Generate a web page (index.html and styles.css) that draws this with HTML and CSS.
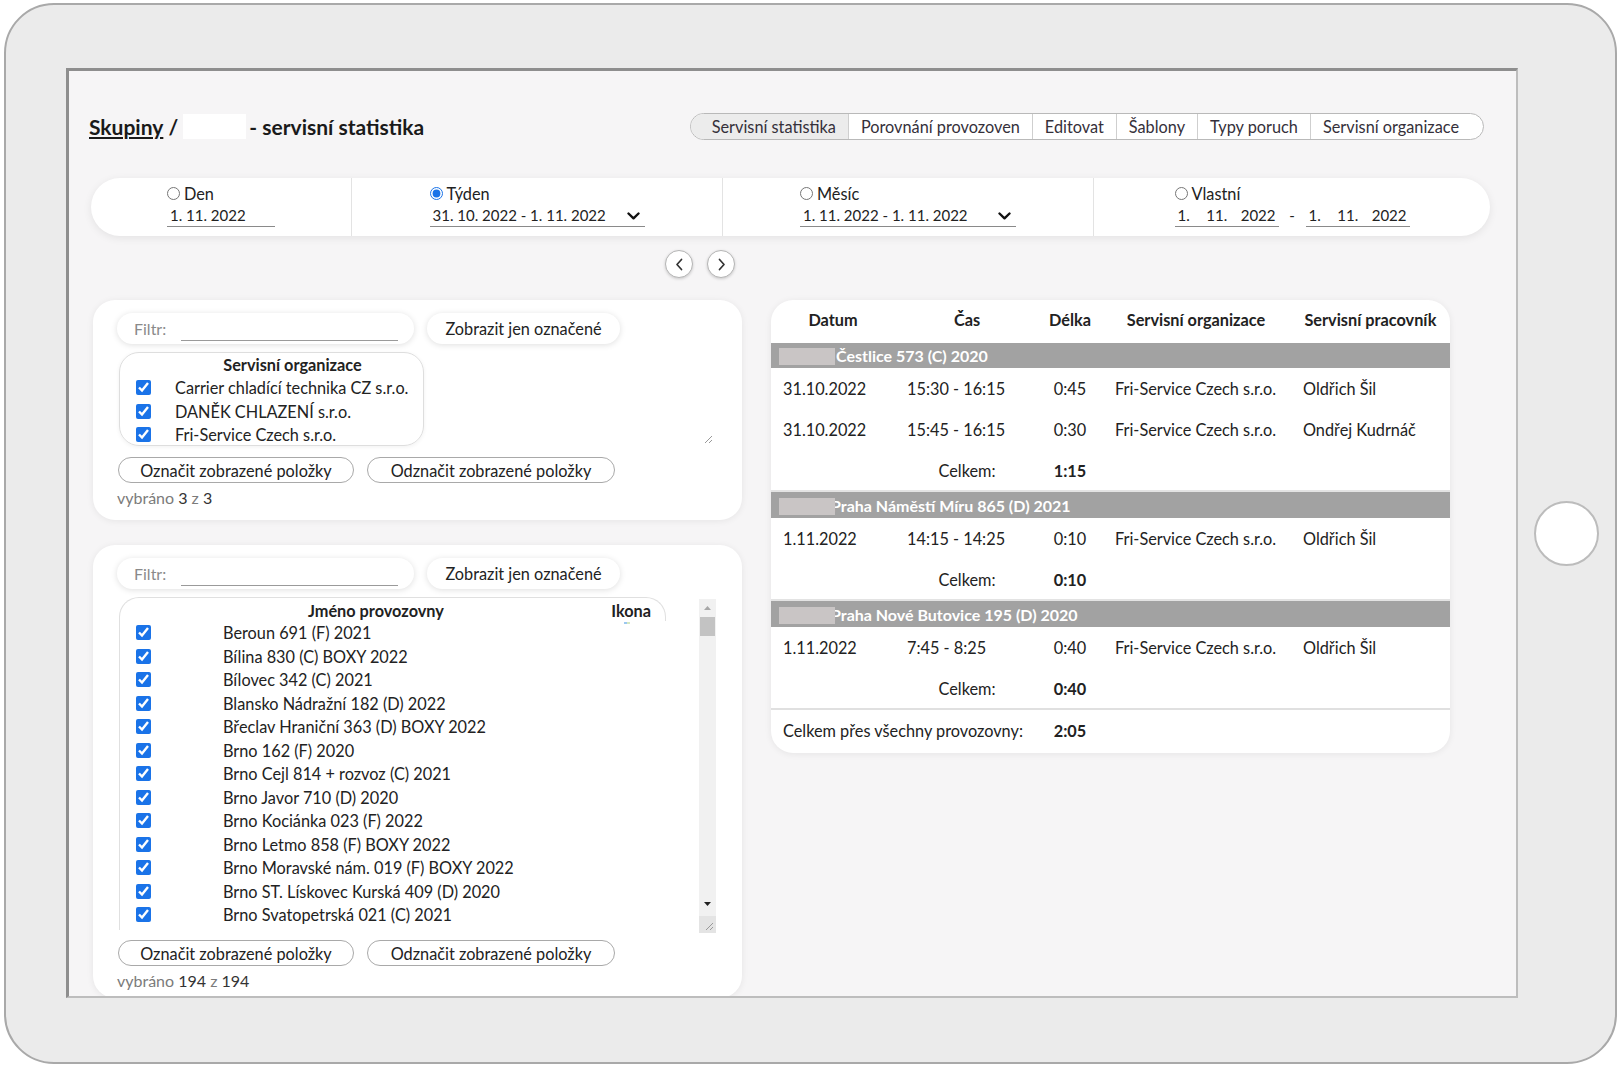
FILE: index.html
```html
<!DOCTYPE html>
<html lang="cs">
<head>
<meta charset="utf-8">
<title>Skupiny - servisní statistika</title>
<link rel="stylesheet" href="styles.css">
</head>
<body>
<div class="tablet">
  <div class="screen">
    <header class="topbar">
      <h1 class="title"><span class="crumb">Skupiny</span> / <span class="redact"></span>- servisní statistika</h1>
      <nav class="tabs">
        <span class="tab tab-active">Servisní statistika</span>
        <span class="tab">Porovnání provozoven</span>
        <span class="tab">Editovat</span>
        <span class="tab">Šablony</span>
        <span class="tab">Typy poruch</span>
        <span class="tab tab-last">Servisní organizace</span>
      </nav>
    </header>

    <div class="periods">
      <div class="period">
        <div class="pwrap">
          <label class="rline"><input type="radio" name="per" class="radio"> Den</label>
          <div class="dinput w-day">1. 11. 2022</div>
        </div>
      </div>
      <div class="period">
        <div class="pwrap">
          <label class="rline"><input type="radio" name="per" class="radio" checked> Týden</label>
          <div class="dinput dselect w-week"><span>31. 10. 2022 - 1. 11. 2022</span>
            <svg class="chev" width="13" height="8" viewBox="0 0 13 8"><path d="M1.5 1.5 L6.5 6.3 L11.5 1.5" fill="none" stroke="#111" stroke-width="2.4" stroke-linecap="round" stroke-linejoin="round"/></svg>
          </div>
        </div>
      </div>
      <div class="period">
        <div class="pwrap">
          <label class="rline"><input type="radio" name="per" class="radio"> Měsíc</label>
          <div class="dinput dselect w-month"><span>1. 11. 2022 - 1. 11. 2022</span>
            <svg class="chev" width="13" height="8" viewBox="0 0 13 8"><path d="M1.5 1.5 L6.5 6.3 L11.5 1.5" fill="none" stroke="#111" stroke-width="2.4" stroke-linecap="round" stroke-linejoin="round"/></svg>
          </div>
        </div>
      </div>
      <div class="period period-last">
        <div class="pwrap">
          <label class="rline"><input type="radio" name="per" class="radio"> Vlastní</label>
          <div class="custom">
            <div class="dinput seg"><span class="s1">1.</span><span class="s2">11.</span><span class="s3">2022</span></div>
            <span class="dash">-</span>
            <div class="dinput seg"><span class="s1">1.</span><span class="s2">11.</span><span class="s3">2022</span></div>
          </div>
        </div>
      </div>
    </div>

    <div class="pager">
      <button class="circ" type="button"><svg width="9" height="13" viewBox="0 0 9 13"><path d="M6.5 1.5 L2 6.5 L6.5 11.5" fill="none" stroke="#333" stroke-width="1.7" stroke-linecap="round" stroke-linejoin="round"/></svg></button>
      <button class="circ" type="button"><svg width="9" height="13" viewBox="0 0 9 13"><path d="M2.5 1.5 L7 6.5 L2.5 11.5" fill="none" stroke="#333" stroke-width="1.7" stroke-linecap="round" stroke-linejoin="round"/></svg></button>
    </div>

    <div class="main">
      <div class="leftcol">
        <section class="panel panel-org">
          <div class="frow">
            <div class="filter"><span class="flabel">Filtr:</span><span class="fline"></span></div>
            <button class="pillbtn" type="button">Zobrazit jen označené</button>
          </div>
          <div class="orgwrap">
            <div class="orgbox">
              <div class="orghead">Servisní organizace</div>
              <div class="orow"><input type="checkbox" class="cb" checked><span>Carrier chladící technika CZ s.r.o.</span></div>
              <div class="orow"><input type="checkbox" class="cb" checked><span>DANĚK CHLAZENÍ s.r.o.</span></div>
              <div class="orow"><input type="checkbox" class="cb" checked><span>Fri-Service Czech s.r.o.</span></div>
            </div>
            <svg class="grip" width="10" height="10" viewBox="0 0 10 10"><path d="M9 2 L2 9 M9 6 L6 9" stroke="#999" stroke-width="1"/></svg>
          </div>
          <div class="brow">
            <button class="obtn b1" type="button">Označit zobrazené položky</button>
            <button class="obtn b2" type="button">Odznačit zobrazené položky</button>
          </div>
          <div class="count">vybráno <b>3</b> z <b>3</b></div>
        </section>

        <section class="panel panel-shops">
          <div class="frow">
            <div class="filter"><span class="flabel">Filtr:</span><span class="fline"></span></div>
            <button class="pillbtn" type="button">Zobrazit jen označené</button>
          </div>
          <div class="listwrap">
            <div class="listbox">
              <div class="lhead"><span>Jméno provozovny</span><span>Ikona</span></div>
              <div class="lbody">
                <span class="dot"></span>
                <div class="lrow"><input type="checkbox" class="cb" checked><span>Beroun 691 (F) 2021</span></div>
                <div class="lrow"><input type="checkbox" class="cb" checked><span>Bílina 830 (C) BOXY 2022</span></div>
                <div class="lrow"><input type="checkbox" class="cb" checked><span>Bílovec 342 (C) 2021</span></div>
                <div class="lrow"><input type="checkbox" class="cb" checked><span>Blansko Nádražní 182 (D) 2022</span></div>
                <div class="lrow"><input type="checkbox" class="cb" checked><span>Břeclav Hraniční 363 (D) BOXY 2022</span></div>
                <div class="lrow"><input type="checkbox" class="cb" checked><span>Brno 162 (F) 2020</span></div>
                <div class="lrow"><input type="checkbox" class="cb" checked><span>Brno Cejl 814 + rozvoz (C) 2021</span></div>
                <div class="lrow"><input type="checkbox" class="cb" checked><span>Brno Javor 710 (D) 2020</span></div>
                <div class="lrow"><input type="checkbox" class="cb" checked><span>Brno Kociánka 023 (F) 2022</span></div>
                <div class="lrow"><input type="checkbox" class="cb" checked><span>Brno Letmo 858 (F) BOXY 2022</span></div>
                <div class="lrow"><input type="checkbox" class="cb" checked><span>Brno Moravské nám. 019 (F) BOXY 2022</span></div>
                <div class="lrow"><input type="checkbox" class="cb" checked><span>Brno ST. Lískovec Kurská 409 (D) 2020</span></div>
                <div class="lrow"><input type="checkbox" class="cb" checked><span>Brno Svatopetrská 021 (C) 2021</span></div>
                <div class="lrow lrow-cut"><input type="checkbox" class="cb" checked><span class="icomark"></span></div>
              </div>
            </div>
            <div class="vscroll">
              <div class="sbtn"><svg width="7" height="4" viewBox="0 0 7 4"><path d="M0 4 L3.5 0 L7 4 Z" fill="#a8a8a8"/></svg></div>
              <div class="strack"><div class="sthumb"></div></div>
              <div class="sbtn"><svg width="7" height="4" viewBox="0 0 7 4"><path d="M0 0 L3.5 4 L7 0 Z" fill="#222"/></svg></div>
              <div class="scorner"><svg width="10" height="10" viewBox="0 0 10 10"><path d="M9 2 L2 9 M9 6 L6 9" stroke="#999" stroke-width="1"/></svg></div>
            </div>
          </div>
          <div class="brow brow2">
            <button class="obtn b1" type="button">Označit zobrazené položky</button>
            <button class="obtn b2" type="button">Odznačit zobrazené položky</button>
          </div>
          <div class="count">vybráno <b>194</b> z <b>194</b></div>
        </section>
      </div>

      <section class="panel panel-table">
        <table class="stats">
          <colgroup>
            <col class="c1"><col class="c2"><col class="c3"><col class="c4"><col class="c5">
          </colgroup>
          <thead>
            <tr><th>Datum</th><th>Čas</th><th>Délka</th><th>Servisní organizace</th><th>Servisní pracovník</th></tr>
          </thead>
          <tbody>
            <tr class="grp grp-first"><td colspan="5"><span class="gredact"></span>Čestlice 573 (C) 2020</td></tr>
            <tr class="drow"><td>31.10.2022</td><td>15:30 - 16:15</td><td class="ctr">0:45</td><td>Fri-Service Czech s.r.o.</td><td>Oldřich Šil</td></tr>
            <tr class="drow"><td>31.10.2022</td><td>15:45 - 16:15</td><td class="ctr">0:30</td><td>Fri-Service Czech s.r.o.</td><td>Ondřej Kudrnáč</td></tr>
            <tr class="drow"><td></td><td class="ctr">Celkem:</td><td class="ctr"><b>1:15</b></td><td></td><td></td></tr>
            <tr class="grp"><td colspan="5"><span class="gredact gr-over"></span>Praha Náměstí Míru 865 (D) 2021</td></tr>
            <tr class="drow"><td>1.11.2022</td><td>14:15 - 14:25</td><td class="ctr">0:10</td><td>Fri-Service Czech s.r.o.</td><td>Oldřich Šil</td></tr>
            <tr class="drow"><td></td><td class="ctr">Celkem:</td><td class="ctr"><b>0:10</b></td><td></td><td></td></tr>
            <tr class="grp"><td colspan="5"><span class="gredact gr-over"></span>Praha Nové Butovice 195 (D) 2020</td></tr>
            <tr class="drow"><td>1.11.2022</td><td>7:45 - 8:25</td><td class="ctr">0:40</td><td>Fri-Service Czech s.r.o.</td><td>Oldřich Šil</td></tr>
            <tr class="drow"><td></td><td class="ctr">Celkem:</td><td class="ctr"><b>0:40</b></td><td></td><td></td></tr>
            <tr class="total"><td colspan="2">Celkem přes všechny provozovny:</td><td class="ctr"><b>2:05</b></td><td></td><td></td></tr>
          </tbody>
        </table>
      </section>
    </div>
  </div>
  <div class="side"><div class="home"></div></div>
</div>
</body>
</html>
```

FILE: styles.css
```css
* { box-sizing: border-box; }
html, body { margin: 0; padding: 0; background: #fff; }
body {
  padding: 3px 3px 3px 4px;
  font-family: Lato, "Open Sans", sans-serif;
  font-size: 16.3px;
  color: #222;
}
.tablet {
  width: 1613px;
  height: 1061px;
  border: 2px solid #a9a9a9;
  border-radius: 50px;
  background: #ebebeb;
  display: flex;
  padding: 63px 0 0 60px;
}
.screen {
  width: 1452px;
  height: 930px;
  flex: none;
  background: #f6f5f6;
  border-top: 3px solid #8e8e8e;
  border-left: 3px solid #8e8e8e;
  border-right: 2px solid #bdbdbd;
  border-bottom: 2px solid #bdbdbd;
  padding: 0 26px 0 22px;
  overflow: hidden;
}
.side {
  flex: 1;
  display: flex;
  align-items: center;
  justify-content: center;
  margin-top: -63px;
}
.home {
  width: 65px;
  height: 65px;
  border-radius: 50%;
  background: #fff;
  border: 2px solid #bcbcbc;
}

/* header */
.topbar {
  margin-top: 42px;
  height: 27px;
  display: flex;
  align-items: center;
  justify-content: space-between;
  padding-right: 6px;
}
.title {
  margin: 0 0 0 -2px;
  font-size: 21px;
  font-weight: 700;
  color: #1a1a1a;
  display: flex;
  align-items: center;
  white-space: pre;
}
.crumb { text-decoration: underline; text-decoration-thickness: 1.5px; text-underline-offset: 2px; }
.redact {
  display: inline-block;
  width: 63px;
  height: 25px;
  background: #fff;
  margin-right: 3px;
}
.tabs {
  display: flex;
  height: 27px;
  border: 1px solid #b9b9b9;
  border-radius: 14px;
  overflow: hidden;
  background: #fff;
}
.tab {
  padding: 0 12px;
  line-height: 25px;
  font-size: 16.3px;
  color: #35303a;
  border-left: 1px solid #cfcfcf;
  white-space: nowrap;
}
.tab-active { background: #ececec; border-left: none; padding-left: 21px; }
.tab-last { padding-right: 24px; }

/* periods */
.periods {
  margin-top: 38px;
  height: 58px;
  display: grid;
  grid-template-columns: 261px 371px 371px 1fr;
  background: #fff;
  border-radius: 29px;
  box-shadow: 0 2px 8px rgba(0, 0, 0, 0.08);
}
.period {
  display: flex;
  justify-content: center;
  padding-top: 5px;
  border-right: 1px solid #e3e3e3;
}
.period-last { border-right: none; }
.pwrap { display: flex; flex-direction: column; }
.rline {
  height: 20px;
  display: flex;
  align-items: center;
  font-size: 16.3px;
  color: #222;
}
.radio {
  width: 13px;
  height: 13px;
  margin: 0 4px 0 0;
  accent-color: #1a73e8;
}
.dinput {
  height: 22px;
  line-height: 21px;
  border-bottom: 1px solid #8a8a8a;
  font-size: 15px;
  padding: 0 3px;
  margin-top: 2px;
  white-space: nowrap;
}
.w-day { width: 108px; }
.dselect { display: flex; align-items: center; justify-content: space-between; padding-right: 5px; }
.w-week { width: 215px; }
.w-month { width: 216px; }
.chev { margin-top: 1px; }
.custom { display: flex; align-items: flex-start; }
.seg { width: 104px; display: flex; }
.seg .s1 { width: 31px; }
.seg .s2 { width: 37px; }
.dash { width: 27px; text-align: center; font-size: 15px; line-height: 24px; }

/* pager */
.pager {
  margin-top: 14px;
  height: 28px;
  display: flex;
  gap: 14px;
  padding-left: 574px;
}
.circ {
  width: 28px;
  height: 28px;
  border-radius: 50%;
  border: 1px solid #b5b5b5;
  background: #fff;
  box-shadow: 0 1px 3px rgba(0, 0, 0, 0.18);
  display: flex;
  align-items: center;
  justify-content: center;
  padding: 0;
}

/* main */
.main {
  margin-top: 22px;
  display: flex;
  gap: 29px;
  padding-left: 2px;
  align-items: flex-start;
}
.leftcol {
  width: 649px;
  display: flex;
  flex-direction: column;
  gap: 25px;
}
.panel {
  background: #fff;
  border-radius: 22px;
  box-shadow: 0 1px 7px rgba(0, 0, 0, 0.07);
}
.panel-org { padding: 13px 26px 11px 24px; }
.panel-shops { padding: 13px 26px 6px 24px; }
.frow { display: flex; gap: 13px; height: 31px; }
.filter {
  width: 297px;
  height: 31px;
  border-radius: 16px;
  background: #fff;
  box-shadow: 0 1px 6px rgba(0, 0, 0, 0.13);
  display: flex;
  align-items: center;
  padding-left: 17px;
}
.flabel { color: #8a8a8a; font-size: 16px; width: 47px; }
.fline {
  width: 217px;
  height: 1px;
  background: #9a9a9a;
  align-self: flex-end;
  margin-bottom: 3px;
}
.pillbtn {
  width: 193px;
  height: 31px;
  border: none;
  border-radius: 16px;
  background: #fff;
  box-shadow: 0 1px 6px rgba(0, 0, 0, 0.13);
  font-family: inherit;
  font-size: 16.3px;
  color: #222;
  padding: 0;
}
.orgwrap {
  margin-top: 8px;
  margin-left: 2px;
  width: 597px;
  height: 94px;
  display: flex;
  justify-content: space-between;
  align-items: flex-end;
}
.orgbox {
  width: 305px;
  height: 94px;
  border: 1px solid #dedede;
  border-radius: 20px;
  box-shadow: 0 1px 4px rgba(0, 0, 0, 0.06);
  overflow: hidden;
}
.orghead {
  height: 23px;
  line-height: 23px;
  font-weight: 700;
  font-size: 16.3px;
  padding-left: 56px;
  padding-right: 14px;
  text-align: center;
}
.orow, .lrow {
  height: 23.5px;
  display: flex;
  align-items: center;
  font-size: 16.3px;
  white-space: nowrap;
}
.cb {
  width: 15px;
  height: 15px;
  margin: 0 0 0 16px;
  accent-color: #1a73e8;
  flex: none;
}
.orow .cb { margin-right: 24px; }
.lrow .cb { margin-right: 72px; }
.lrow-cut { align-items: flex-start; padding-top: 4px; }
.grip { margin: 0 3px 2px 0; }
.brow { margin-top: 11px; display: flex; gap: 13px; margin-left: 1px; }
.brow2 { margin-top: 7px; }
.obtn {
  height: 26px;
  border: 1px solid #a9a9a9;
  border-radius: 13px;
  background: #fff;
  font-family: inherit;
  font-size: 16.3px;
  color: #222;
  padding: 0;
}
.b1 { width: 236px; }
.b2 { width: 248px; }
.count {
  margin-top: 4px;
  height: 22px;
  line-height: 22px;
  font-size: 16px;
  color: #7b7b7b;
}
.count b { font-weight: 400; color: #333; }

.listwrap {
  margin-top: 8px;
  margin-left: 2px;
  width: 597px;
  height: 336px;
  display: flex;
  justify-content: space-between;
}
.listbox {
  width: 547px;
  height: 333px;
  overflow: hidden;
  display: flex;
  flex-direction: column;
}
.lhead {
  height: 24px;
  flex: none;
  border: 1px solid #e0e0e0;
  border-bottom: none;
  border-radius: 20px 20px 0 0;
  display: flex;
  justify-content: space-between;
  align-items: center;
  padding: 2px 14px 0 188px;
  font-weight: 700;
  font-size: 16.3px;
}
.lbody {
  flex: 1;
  border-left: 1px solid #e0e0e0;
  overflow: hidden;
  position: relative;
}
.dot {
  position: absolute;
  left: 504px;
  top: 1px;
  width: 6px;
  height: 2px;
  background: linear-gradient(90deg, #9cc8f0 50%, #d5e8c0 50%);
}
.icomark {
  width: 9px;
  height: 3px;
  margin-left: auto;
  margin-right: 29px;
  margin-top: 1px;
  background: linear-gradient(90deg, #2c9a3c 50%, #2b6fd6 50%);
}
.vscroll {
  width: 17px;
  height: 334px;
  margin-top: 2px;
  background: #f1f1f1;
  display: flex;
  flex-direction: column;
}
.sbtn { height: 17px; display: flex; align-items: center; justify-content: center; flex: none; }
.strack { flex: 1; padding: 1px 1px 0; }
.sthumb { height: 19px; background: #c3c3c3; }
.scorner {
  height: 17px;
  flex: none;
  background: #e4e4e4;
  display: flex;
  align-items: flex-end;
  justify-content: flex-end;
  padding: 0 2px 2px 0;
  margin-top: 4px;
}

/* table */
.panel-table {
  width: 679px;
  overflow: hidden;
  padding-bottom: 2px;
}
.stats {
  width: 679px;
  border-collapse: collapse;
  table-layout: fixed;
  font-size: 16.3px;
}
.c1 { width: 124px; }
.c2 { width: 144px; }
.c3 { width: 62px; }
.c4 { width: 190px; }
.c5 { width: 159px; }
.stats th {
  height: 43px;
  padding: 0 0 5px;
  font-weight: 700;
  text-align: center;
  vertical-align: middle;
  white-space: nowrap;
}
.stats td {
  padding: 0 0 0 12px;
  white-space: nowrap;
  vertical-align: middle;
}
.stats td.ctr { text-align: center; padding: 0; }
.drow td { height: 41px; }
.stats tr.drow td:nth-child(4) { padding-left: 14px; }
.grp td {
  height: 27px;
  background: #a2a2a2;
  color: #fff;
  font-weight: 700;
  font-size: 16px;
  padding-left: 8px;
  border-top: 2px solid #e3e3e3;
}
.grp-first td { height: 25px; border-top: none; }
.gredact {
  display: inline-block;
  width: 56px;
  height: 17px;
  background: #c9c5c5;
  vertical-align: -3px;
  margin-right: 1px;
}
.gr-over {
  position: relative;
  margin-right: -4px;
}
.total td {
  height: 42px;
  border-top: 2px solid #e0e0e0;
}
```
